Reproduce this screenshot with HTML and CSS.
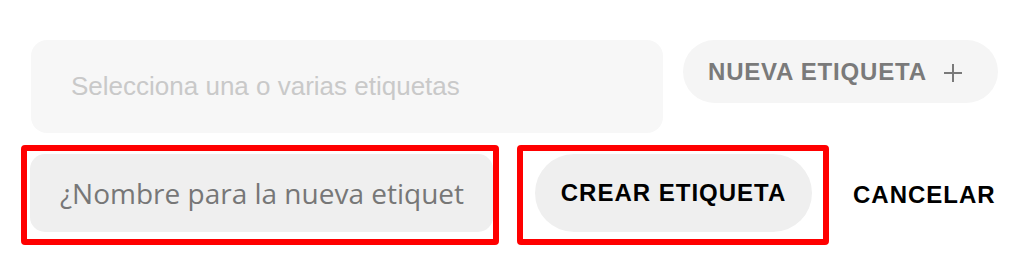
FILE: index.html
```html
<!DOCTYPE html>
<html lang="es">
<head>
    <meta charset="UTF-8">
    <meta name="viewport" content="width=device-width, initial-scale=1.0">
    <title>Etiquetas</title>
    <link rel="stylesheet" href="styles.css">
</head>
<body>
    <div class="tags-row">
        <div class="tag-select">Selecciona una o varias etiquetas</div>
        <button class="new-tag">
            <span>NUEVA ETIQUETA</span>
            <svg class="plus" width="20" height="20" viewBox="0 0 20 20">
                <path d="M10 1v18M1 10h18" stroke="#7a7a7a" stroke-width="2" fill="none"/>
            </svg>
        </button>
    </div>

    <div class="create-row">
        <div class="marked marked-input">
            <input type="text" class="tag-name" placeholder="¿Nombre para la nueva etiqueta?">
        </div>
        <div class="marked marked-button">
            <button class="create-tag">CREAR ETIQUETA</button>
        </div>
        <button class="cancel">CANCELAR</button>
    </div>
</body>
</html>
```

FILE: styles.css
```css
body {
    margin: 0;
    background-color: #fff;
    font-family: 'Liberation Sans', Arial, sans-serif;
}

button {
    font-family: 'Liberation Sans', Arial, sans-serif;
    border: none;
    cursor: pointer;
}

.tags-row {
    display: flex;
    align-items: flex-start;
    gap: 20px;
    padding: 40px 0 0 31px;
}

.tag-select {
    width: 632px;
    height: 93px;
    box-sizing: border-box;
    display: flex;
    align-items: center;
    padding-left: 40px;
    background-color: #f7f7f7;
    border-radius: 16px;
    color: #c9c9c9;
    font-size: 26px;
}

.new-tag {
    width: 315px;
    height: 63px;
    display: flex;
    align-items: center;
    padding: 0 0 0 25px;
    background-color: #f5f5f5;
    border-radius: 32px;
    color: #7a7a7a;
    font-size: 24px;
    font-weight: bold;
    letter-spacing: 0.8px;
}

.plus {
    margin-left: 16px;
    margin-top: 2px;
}

.create-row {
    display: flex;
    align-items: center;
    padding: 12px 0 0 21px;
}

.marked {
    border: 6px solid #ff0000;
    border-radius: 4px;
    padding-top: 3px;
    padding-bottom: 7px;
}

.marked-input {
    width: 478px;
    box-sizing: border-box;
    padding-left: 3px;
    padding-right: 0;
}

.marked-button {
    margin-left: 18px;
    padding-left: 12px;
    padding-right: 11px;
}

.tag-name {
    display: block;
    width: 463px;
    height: 78px;
    box-sizing: border-box;
    padding: 0 29px 0 30px;
    border: none;
    border-radius: 15px;
    background-color: #efefef;
    font-family: 'Open Sans', sans-serif;
    font-size: 28px;
    color: #333;
    outline: none;
}

.tag-name::placeholder {
    color: #777;
}

.create-tag {
    display: block;
    width: 277px;
    height: 78px;
    background-color: #efefef;
    border-radius: 39px;
    color: #000;
    font-size: 24px;
    font-weight: bold;
    letter-spacing: 1px;
}

.cancel {
    margin-left: 24px;
    padding: 0;
    background: none;
    color: #000;
    font-size: 24px;
    font-weight: bold;
    letter-spacing: 1px;
}
```
